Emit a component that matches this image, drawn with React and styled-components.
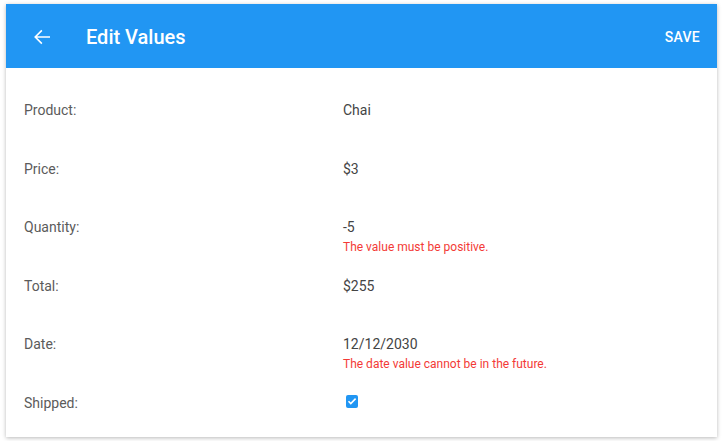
import React, { useState } from 'react';
import styled, { createGlobalStyle } from 'styled-components';

const GlobalStyle = createGlobalStyle`
  body {
    margin: 0;
    background: #fff;
    font-family: Roboto, "Liberation Sans", sans-serif;
  }
`;

const Page = styled.div`
  padding: 4px 6px;
`;

const Card = styled.div`
  width: 711px;
  height: 433px;
  box-sizing: border-box;
  background: #fff;
  box-shadow: 0 1px 4px rgba(0, 0, 0, 0.28);
  display: flex;
  flex-direction: column;
`;

const Header = styled.div`
  height: 64px;
  box-sizing: border-box;
  display: flex;
  align-items: center;
  background-color: #2196f3;
  color: #fff;
  padding: 2px 17px 0 24px;
`;

const BackButton = styled.button`
  width: 24px;
  height: 24px;
  padding: 0;
  border: none;
  background: transparent;
  color: #fff;
  display: flex;
  align-items: center;
  justify-content: center;
  cursor: pointer;
`;

const Title = styled.h1`
  margin: 0 0 0 32px;
  font-size: 20px;
  font-weight: 500;
  flex: 1;
`;

const SaveButton = styled.button`
  border: none;
  background: transparent;
  color: #fff;
  font-family: inherit;
  font-size: 14px;
  font-weight: 500;
  letter-spacing: 0.3px;
  padding: 0;
  cursor: pointer;
`;

const Body = styled.div`
  padding: 13px 18px 4px;
`;

const Row = styled.div`
  height: 58.6px;
  display: grid;
  grid-template-columns: 319px 1fr;
  align-items: start;
`;

const Label = styled.div`
  margin-top: 19px;
  line-height: 20px;
  font-size: 14px;
  color: #5b5b5b;
`;

const ValueCell = styled.div`
  margin-top: 19px;
  display: flex;
  flex-direction: column;
`;

const Value = styled.div`
  line-height: 20px;
  font-size: 14px;
  color: #444;
`;

const ErrorText = styled.div`
  margin-top: 2px;
  line-height: 16px;
  font-size: 12px;
  color: #f33a36;
`;

const CheckBox = styled.span`
  margin: 2px 0 0 3px;
  width: 12px;
  height: 13px;
  border-radius: 2px;
  background: ${props => (props.checked ? '#2196f3' : '#fff')};
  border: ${props => (props.checked ? 'none' : '1px solid #999')};
  display: flex;
  align-items: center;
  justify-content: center;
  cursor: pointer;
`;

const ArrowBack = () => (
  <svg width="24" height="24" viewBox="0 0 24 24" fill="currentColor">
    <path d="M20 11.2H7.1l5.3-5.3L11.3 4.8 4.1 12l7.2 7.2 1.1-1.1-5.3-5.3H20z" />
  </svg>
);

const rows = [
  { label: 'Product:', value: 'Chai' },
  { label: 'Price:', value: '$3' },
  { label: 'Quantity:', value: '-5', error: 'The value must be positive.' },
  { label: 'Total:', value: '$255' },
  { label: 'Date:', value: '12/12/2030', error: 'The date value cannot be in the future.' },
];

export default function App() {
  const [shipped, setShipped] = useState(true);

  return (
    <Page>
      <GlobalStyle />
      <Card>
        <Header>
          <BackButton aria-label="Back">
            <ArrowBack />
          </BackButton>
          <Title>Edit Values</Title>
          <SaveButton>SAVE</SaveButton>
        </Header>
        <Body>
          {rows.map(row => (
            <Row key={row.label}>
              <Label>{row.label}</Label>
              <ValueCell>
                <Value>{row.value}</Value>
                {row.error && <ErrorText>{row.error}</ErrorText>}
              </ValueCell>
            </Row>
          ))}
          <Row>
            <Label>Shipped:</Label>
            <ValueCell>
              <CheckBox checked={shipped} onClick={() => setShipped(!shipped)}>
                {shipped && (
                  <svg width="10" height="10" viewBox="0 0 10 10">
                    <path d="M1.5 5.2l2.3 2.3L8.6 2.6" fill="none" stroke="#fff" strokeWidth="1.6" />
                  </svg>
                )}
              </CheckBox>
            </ValueCell>
          </Row>
        </Body>
      </Card>
    </Page>
  );
}
